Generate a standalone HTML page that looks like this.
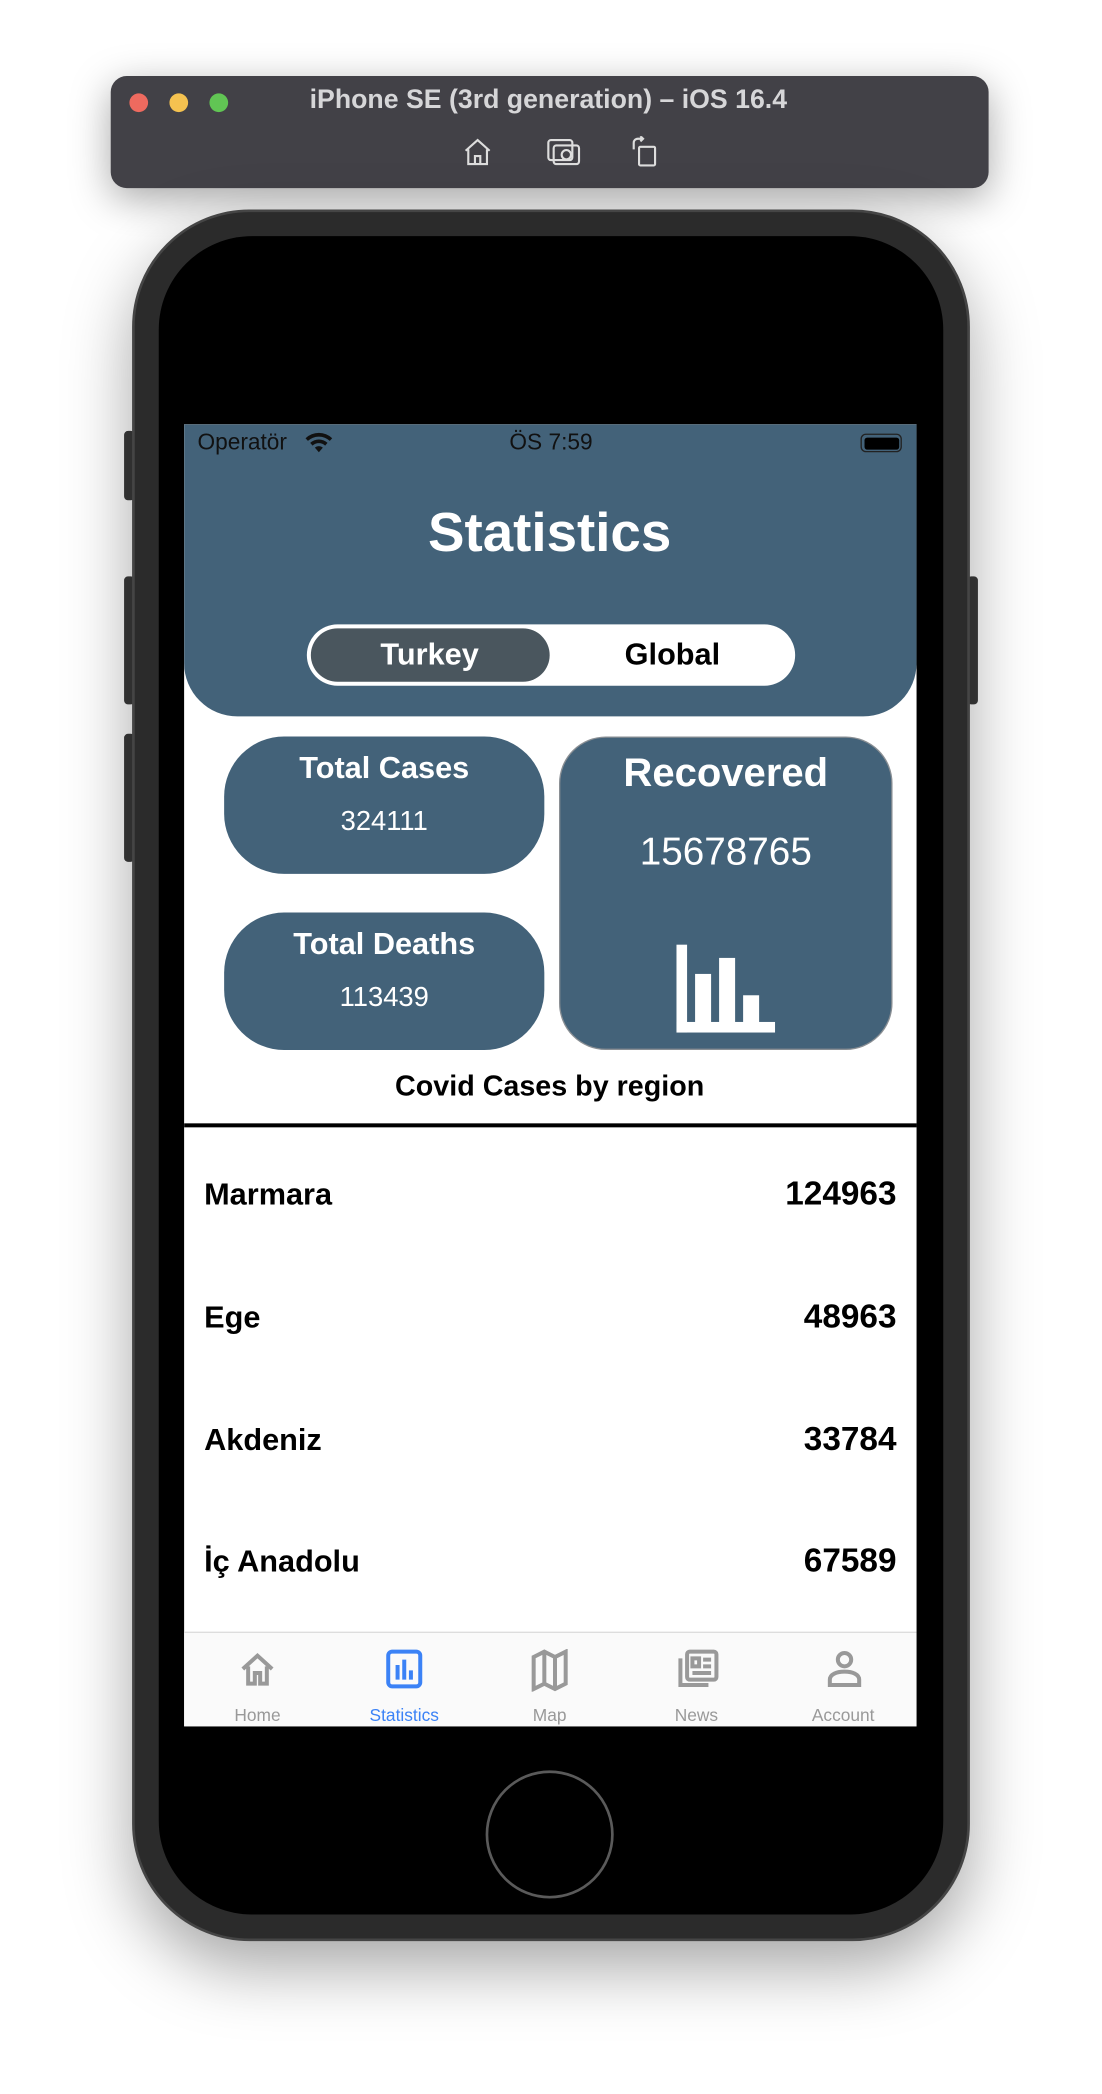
<!DOCTYPE html>
<html><head><meta charset="utf-8"><style>
*{margin:0;padding:0;box-sizing:border-box}
body{width:1102px;height:2094px;background:#fff;overflow:hidden;font-family:"Liberation Sans",sans-serif}
#w{position:absolute;left:0;top:0;width:826px;height:1568px;transform:scale(1.33414);transform-origin:0 0}
.a{position:absolute}
.c{position:absolute;text-align:center;transform:translateX(-50%);white-space:nowrap}
</style></head><body><div id="w">
<div class="a" style="left:83px;top:57px;width:658px;height:84px;background:#424147;border-radius:12px;box-shadow:0 8px 30px rgba(0,0,0,.35)"></div>
<div class="a" style="left:97px;top:70px;width:14px;height:14px;border-radius:50%;background:#ee6a5f"></div>
<div class="a" style="left:127px;top:70px;width:14px;height:14px;border-radius:50%;background:#f5c250"></div>
<div class="a" style="left:157px;top:70px;width:14px;height:14px;border-radius:50%;background:#61c554"></div>
<div class="c" style="left:411px;top:64px;color:#d6d6d8;font-weight:bold;font-size:20px">iPhone SE (3rd generation) – iOS 16.4</div>
<svg class="a" style="left:346px;top:103px" width="24" height="22" viewBox="0 0 24 22" fill="none" stroke="#ddd" stroke-width="1.6"><path d="M3 10L12 2l9 8M5 9v11h14V9M10 20v-6h4v6"/></svg>
<svg class="a" style="left:410px;top:103px" width="26" height="22" viewBox="0 0 26 22" fill="none" stroke="#ddd" stroke-width="1.6"><rect x="1" y="2" width="18" height="15" rx="2"/><rect x="5" y="6" width="19" height="14" rx="2"/><circle cx="14.5" cy="13" r="3.5"/></svg>
<svg class="a" style="left:472px;top:102px" width="22" height="24" viewBox="0 0 22 24" fill="none" stroke="#ddd" stroke-width="1.6"><rect x="7" y="8" width="12" height="14" rx="1"/><path d="M3 10V5a3 3 0 0 1 3-3h4M8 0l2 2-2 2"/></svg>

<div class="a" style="left:93px;top:323px;width:8px;height:52px;background:#3a3a3a;border-radius:3px"></div>
<div class="a" style="left:93px;top:432px;width:8px;height:96px;background:#3a3a3a;border-radius:3px"></div>
<div class="a" style="left:93px;top:550px;width:8px;height:96px;background:#3a3a3a;border-radius:3px"></div>
<div class="a" style="left:725px;top:432px;width:8px;height:96px;background:#3a3a3a;border-radius:3px"></div>
<div class="a" style="left:99px;top:157px;width:628px;height:1298px;background:#2b2b2b;border-radius:88px;border:2px solid #454545;box-shadow:0 20px 50px rgba(0,0,0,.35)"></div>
<div class="a" style="left:119px;top:177px;width:588px;height:1258px;background:#000;border-radius:70px"></div>
<div class="a" style="left:364px;top:1327px;width:96px;height:96px;border-radius:50%;border:2px solid #5a5a5a"></div>

<div class="a" style="left:138px;top:318px;width:549px;height:976px;background:#fff;overflow:hidden">
 <div class="a" style="left:0;top:0;width:549px;height:219px;background:#436279;border-radius:0 0 40px 40px"></div>
 <div class="a" style="left:10px;top:4px;font-size:17px;color:#111">Operatör</div>
 <svg class="a" style="left:90px;top:6px" width="22" height="16" viewBox="0 0 22 16"><path d="M11 15l-3-3.5a4.5 4.5 0 0 1 6 0zM4.5 8a9.5 9.5 0 0 1 13 0l-1.8 2a7 7 0 0 0-9.4 0zM1 4.5a14.5 14.5 0 0 1 20 0l-1.8 2a12 12 0 0 0-16.4 0z" fill="#111"/></svg>
 <div class="c" style="left:275px;top:4px;font-size:17px;color:#111">ÖS 7:59</div>
 <div class="a" style="left:507px;top:7px;width:31px;height:14px;border:1.5px solid #222;border-radius:4px;padding:1.5px"><div style="width:100%;height:100%;background:#000;border-radius:2px"></div></div>
 <div class="c" style="left:274px;top:58px;font-size:41px;font-weight:bold;color:#fff">Statistics</div>
 <div class="a" style="left:92px;top:150px;width:366px;height:46px;background:#fff;border-radius:23px"></div>
 <div class="a" style="left:95px;top:153px;width:179px;height:40px;background:#4a565e;border-radius:20px"></div>
 <div class="c" style="left:184px;top:159px;font-size:23px;font-weight:bold;color:#fff">Turkey</div>
 <div class="c" style="left:366px;top:159px;font-size:23px;font-weight:bold;color:#000">Global</div>

 <div class="a" style="left:30px;top:234px;width:240px;height:103px;background:#436279;border-radius:45px"></div>
 <div class="c" style="left:150px;top:244px;font-size:23px;font-weight:bold;color:#fff">Total Cases</div>
 <div class="c" style="left:150px;top:286px;font-size:20.5px;color:#fff">324111</div>
 <div class="a" style="left:30px;top:366px;width:240px;height:103px;background:#436279;border-radius:45px"></div>
 <div class="c" style="left:150px;top:376px;font-size:23px;font-weight:bold;color:#fff">Total Deaths</div>
 <div class="c" style="left:150px;top:418px;font-size:20.5px;color:#fff">113439</div>
 <div class="a" style="left:281px;top:234px;width:250px;height:235px;background:#436279;border-radius:35px;border:1.5px solid #8a8f94"></div>
 <div class="c" style="left:406px;top:245px;font-size:30px;font-weight:bold;color:#fff">Recovered</div>
 <div class="c" style="left:406px;top:305px;font-size:29px;color:#fff">15678765</div>
 <svg class="a" style="left:369px;top:390px" width="74" height="66" viewBox="0 0 74 66" fill="#fff"><rect x="0" y="0" width="8" height="66"/><rect x="0" y="58" width="74" height="8"/><rect x="14" y="22" width="12" height="40"/><rect x="32" y="10" width="12" height="52"/><rect x="50" y="38" width="12" height="24"/></svg>
 <div class="c" style="left:274px;top:484px;font-size:21.5px;font-weight:bold;color:#000">Covid Cases by region</div>
 <div class="a" style="left:0;top:524px;width:549px;height:2.5px;background:#000"></div>

 <div class="a" style="left:15px;top:564px;font-size:23px;font-weight:bold">Marmara</div>
 <div class="a" style="right:15px;top:563px;font-size:25px;font-weight:bold">124963</div>
 <div class="a" style="left:15px;top:656px;font-size:23px;font-weight:bold">Ege</div>
 <div class="a" style="right:15px;top:655px;font-size:25px;font-weight:bold">48963</div>
 <div class="a" style="left:15px;top:748px;font-size:23px;font-weight:bold">Akdeniz</div>
 <div class="a" style="right:15px;top:747px;font-size:25px;font-weight:bold">33784</div>
 <div class="a" style="left:15px;top:839px;font-size:23px;font-weight:bold">İç Anadolu</div>
 <div class="a" style="right:15px;top:838px;font-size:25px;font-weight:bold">67589</div>

 <div class="a" style="left:0;top:905px;width:549px;height:71px;background:#fafafa;border-top:1px solid #ddd"></div>
 <svg class="a" style="left:41px;top:919px" width="28" height="28" viewBox="0 0 28 28" fill="none" stroke="#999" stroke-width="3"><path d="M3 14L14 4l11 10M7 12v13h5v-8h4v8h5V12"/></svg>
 <div class="c" style="left:55px;top:960px;font-size:13px;color:#999">Home</div>
 <svg class="a" style="left:151px;top:918px" width="28" height="30" viewBox="0 0 28 30" fill="none" stroke="#3b82f6"><rect x="2" y="2" width="24" height="26" rx="3" stroke-width="3"/><path d="M9 12v11M14 8v15M19 16v7" stroke-width="3"/></svg>
 <div class="c" style="left:165px;top:960px;font-size:13px;color:#3b82f6">Statistics</div>
 <svg class="a" style="left:260px;top:918px" width="28" height="32" viewBox="0 0 28 32" fill="none" stroke="#999" stroke-width="3"><path d="M2 6l8-4 8 4 8-4v24l-8 4-8-4-8 4zM10 2v24M18 6v24"/></svg>
 <div class="c" style="left:274px;top:960px;font-size:13px;color:#999">Map</div>
 <svg class="a" style="left:369px;top:918px" width="32" height="32" viewBox="0 0 32 32" fill="none" stroke="#999" stroke-width="3"><rect x="8" y="2" width="22" height="21" rx="2"/><path d="M3 7v20h21M12 7h5v6h-5zM20 8h6M20 13h6M12 18h14"/></svg>
 <div class="c" style="left:384px;top:960px;font-size:13px;color:#999">News</div>
 <svg class="a" style="left:481px;top:918px" width="28" height="30" viewBox="0 0 28 30" fill="none" stroke="#999" stroke-width="3"><circle cx="14" cy="8" r="5"/><path d="M3 27v-4c0-4 5-6 11-6s11 2 11 6v4z"/></svg>
 <div class="c" style="left:494px;top:960px;font-size:13px;color:#999">Account</div>
</div>
</div></body></html>
